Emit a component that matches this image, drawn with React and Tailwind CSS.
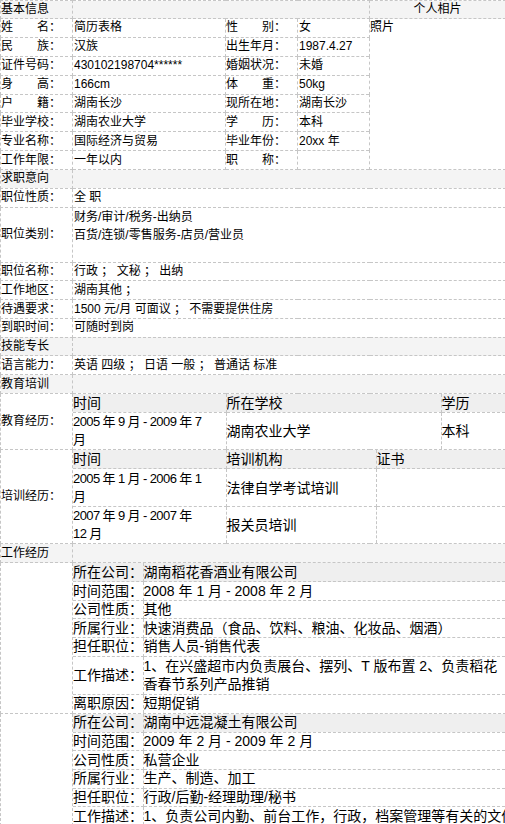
import React from 'react';

const bd = 'border border-dashed border-[#c6c6c6]';
const font = { fontFamily: '"Liberation Sans", "Noto Sans CJK SC", sans-serif' };

const basicRows = [
  ['姓　　名：', '简历表格', '性　　别：', '女'],
  ['民　　族：', '汉族', '出生年月：', '1987.4.27'],
  ['证件号码：', '430102198704******', '婚姻状况：', '未婚'],
  ['身　　高：', '166cm', '体　　重：', '50kg'],
  ['户　　籍：', '湖南长沙', '现所在地：', '湖南长沙'],
  ['毕业学校：', '湖南农业大学', '学　　历：', '本科'],
  ['专业名称：', '国际经济与贸易', '毕业年份：', '20xx 年'],
  ['工作年限：', '一年以内', '职　　称：', ''],
];

// third item: 'long' = wraps to two lines, 'clip' = single line cut at the edge
const jobs = [
  [
    ['所在公司：', '湖南稻花香酒业有限公司'],
    ['时间范围：', '2008 年 1 月 - 2008 年 2 月'],
    ['公司性质：', '其他'],
    ['所属行业：', '快速消费品（食品、饮料、粮油、化妆品、烟酒）'],
    ['担任职位：', '销售人员-销售代表'],
    ['工作描述：', '1、在兴盛超市内负责展台、摆列、T 版布置 2、负责稻花香春节系列产品推销', 'long'],
    ['离职原因：', '短期促销'],
  ],
  [
    ['所在公司：', '湖南中远混凝土有限公司'],
    ['时间范围：', '2009 年 2 月 - 2009 年 2 月'],
    ['公司性质：', '私营企业'],
    ['所属行业：', '生产、制造、加工'],
    ['担任职位：', '行政/后勤-经理助理/秘书'],
    ['工作描述：', '1、负责公司内勤、前台工作，行政，档案管理等有关的文件整理工作', 'clip'],
  ],
];

function Section({ title }) {
  return (
    <tr className="bg-[#f4f4f4]">
      <td className={`${bd} h-[18.7px] px-0`}>{title}</td>
      <td colSpan={4} className={bd}></td>
    </tr>
  );
}

function Line({ label, children }) {
  return (
    <tr>
      <td className={`${bd} h-[18.8px] whitespace-nowrap`}>{label}</td>
      <td colSpan={4} className={`${bd} pl-px`}>{children}</td>
    </tr>
  );
}

export default function App() {
  return (
    <div className="w-[505px] bg-white text-black" style={font}>
      <table className="w-[505px] table-fixed border-collapse text-[12px] leading-[17px]">
        <colgroup>
          <col className="w-[72px]" />
          <col className="w-[153px]" />
          <col className="w-[72px]" />
          <col className="w-[72px]" />
          <col className="w-[136px]" />
        </colgroup>
        <tbody>
          {/* 基本信息 */}
          <tr className="bg-[#f4f4f4]">
            <td className={`${bd} h-[18px]`}>基本信息</td>
            <td colSpan={3} className={bd}></td>
            <td className={`${bd} text-center`}>个人相片</td>
          </tr>
          {basicRows.map((r, i) => (
            <tr key={i}>
              <td className={`${bd} h-[18.9px] whitespace-nowrap`}>{r[0]}</td>
              <td className={`${bd} pl-px whitespace-nowrap`}>{r[1]}</td>
              <td className={`${bd} whitespace-nowrap`}>{r[2]}</td>
              <td className={`${bd} pl-px whitespace-nowrap`}>{r[3]}</td>
              {i === 0 && (
                <td rowSpan={8} className={`${bd} align-top`}>
                  <div>照片</div>
                </td>
              )}
            </tr>
          ))}

          {/* 求职意向 */}
          <Section title="求职意向" />
          <Line label="职位性质：">全 职</Line>
          <tr>
            <td className={`${bd} h-[55px] whitespace-nowrap`}>职位类别：</td>
            <td colSpan={4} className={`${bd} pl-px leading-[18px]`}>
              <div>财务/审计/税务-出纳员</div>
              <div>百货/连锁/零售服务-店员/营业员</div>
              <div>&nbsp;</div>
            </td>
          </tr>
          <Line label="职位名称：">行政 ； 文秘 ； 出纳</Line>
          <Line label="工作地区：">湖南其他 ；</Line>
          <Line label="待遇要求：">1500 元/月 可面议 ； 不需要提供住房</Line>
          <Line label="到职时间：">可随时到岗</Line>

          {/* 技能专长 */}
          <Section title="技能专长" />
          <Line label="语言能力：">英语 四级 ； 日语 一般 ； 普通话 标准</Line>

          {/* 教育培训 */}
          <Section title="教育培训" />
          <tr>
            <td className={`${bd} whitespace-nowrap`}>教育经历：</td>
            <td colSpan={4} className={`${bd} p-0`}>
              <table className="w-full table-fixed border-collapse border-hidden text-[14px] leading-[18px]">
                <colgroup>
                  <col className="w-[153px]" />
                  <col className="w-[215px]" />
                  <col />
                </colgroup>
                <tbody>
                  <tr className="bg-[#efefef]">
                    <td className={`${bd} h-[18px]`}>时间</td>
                    <td className={bd}>所在学校</td>
                    <td className={bd}>学历</td>
                  </tr>
                  <tr>
                    <td className={`${bd} h-[37px] whitespace-nowrap tracking-[-0.6px] text-[13px]`}>
                      2005 年 9 月 - 2009 年 7<br />月
                    </td>
                    <td className={bd}>湖南农业大学</td>
                    <td className={bd}>本科</td>
                  </tr>
                </tbody>
              </table>
            </td>
          </tr>
          <tr>
            <td className={`${bd} whitespace-nowrap`}>培训经历：</td>
            <td colSpan={4} className={`${bd} p-0`}>
              <table className="w-full table-fixed border-collapse border-hidden text-[14px] leading-[18px]">
                <colgroup>
                  <col className="w-[153px]" />
                  <col className="w-[150px]" />
                  <col />
                </colgroup>
                <tbody>
                  <tr className="bg-[#efefef]">
                    <td className={`${bd} h-[18px]`}>时间</td>
                    <td className={bd}>培训机构</td>
                    <td className={bd}>证书</td>
                  </tr>
                  <tr>
                    <td className={`${bd} h-[38px] whitespace-nowrap tracking-[-0.6px] text-[13px]`}>
                      2005 年 1 月 - 2006 年 1<br />月
                    </td>
                    <td className={bd}>法律自学考试培训</td>
                    <td className={bd}></td>
                  </tr>
                  <tr>
                    <td className={`${bd} h-[36px] whitespace-nowrap tracking-[-0.6px] text-[13px]`}>
                      2007 年 9 月 - 2007 年<br />12 月
                    </td>
                    <td className={bd}>报关员培训</td>
                    <td className={bd}></td>
                  </tr>
                </tbody>
              </table>
            </td>
          </tr>

          {/* 工作经历 */}
          <Section title="工作经历" />
          {jobs.map((job, j) => (
            <tr key={j}>
              <td className={bd}></td>
              <td colSpan={4} className={`${bd} p-0`}>
                <table className="w-full table-fixed border-collapse border-hidden text-[14px] leading-[17px]">
                  <colgroup>
                    <col className="w-[70px]" />
                    <col />
                  </colgroup>
                  <tbody>
                    {job.map(([k, v, kind], i) => (
                      <tr key={i} className={i === 0 ? 'bg-[#efefef]' : ''}>
                        <td className={`${bd} ${kind === 'long' ? 'h-[38px]' : 'h-[18.6px]'} whitespace-nowrap`}>{k}</td>
                        <td
                          className={`${bd} ${kind === 'long' ? 'leading-[18px]' : ''} ${
                            kind === 'clip' ? 'whitespace-nowrap overflow-hidden' : ''
                          }`}
                        >
                          {v}
                        </td>
                      </tr>
                    ))}
                  </tbody>
                </table>
              </td>
            </tr>
          ))}
        </tbody>
      </table>
    </div>
  );
}
